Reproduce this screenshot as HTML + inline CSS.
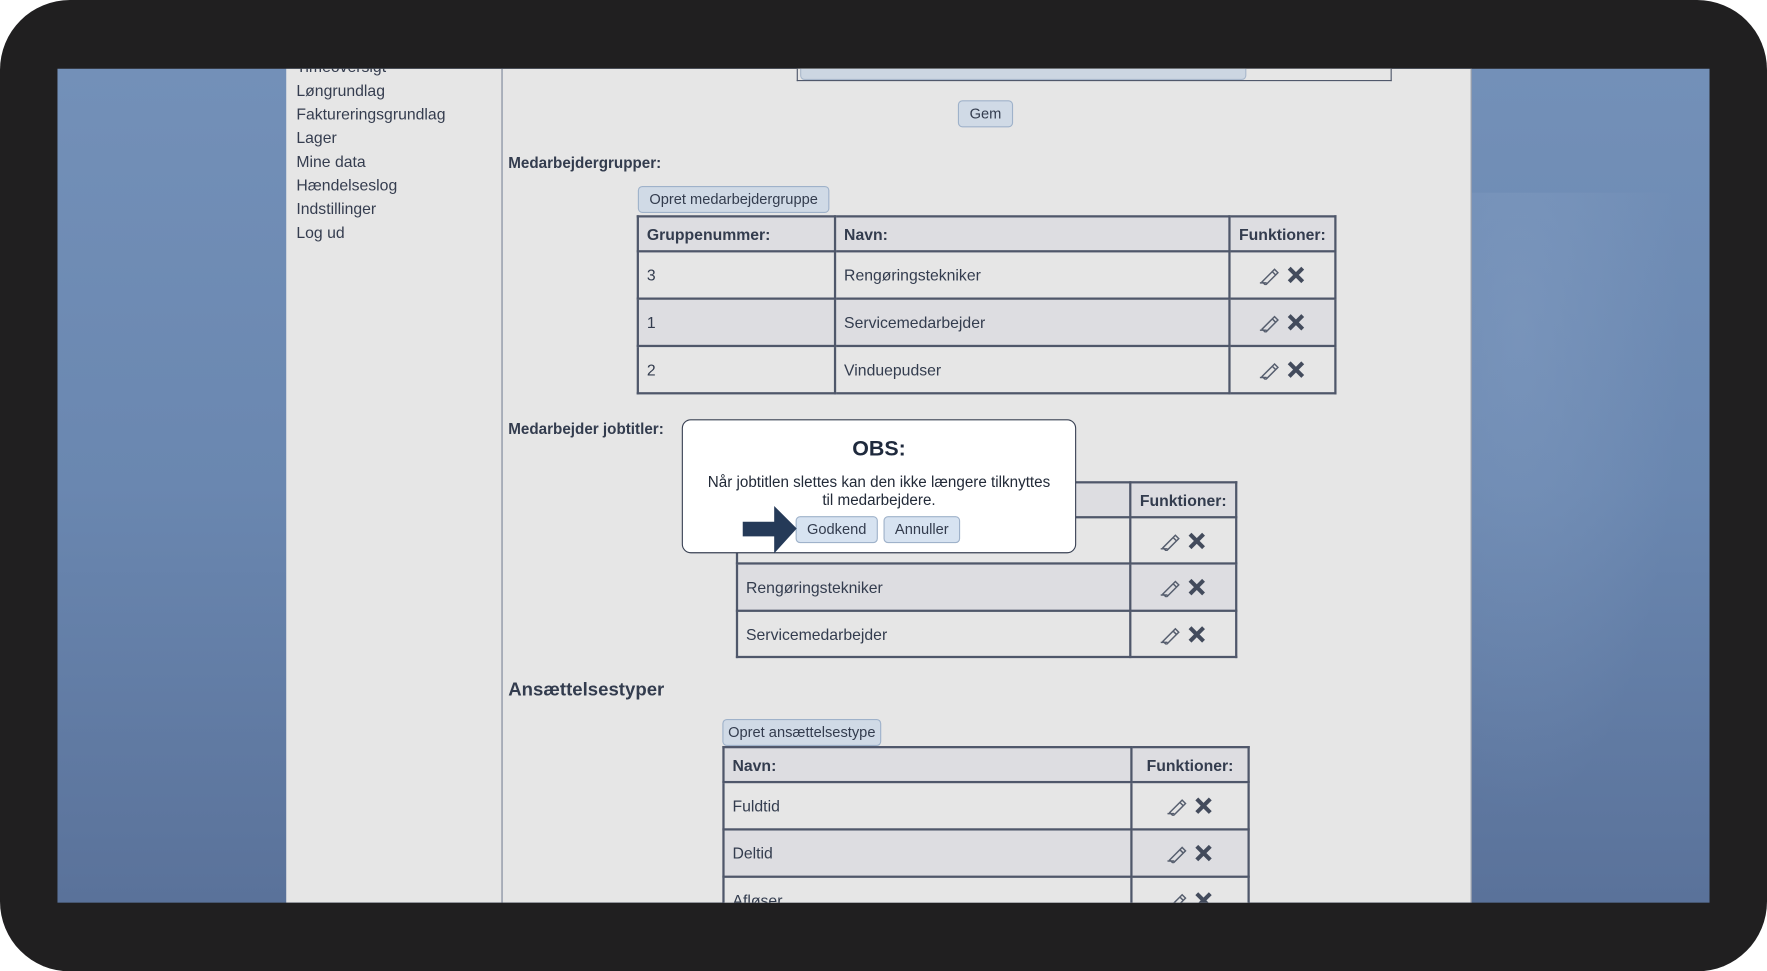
<!DOCTYPE html>
<html><head><meta charset="utf-8"><style>
html,body{margin:0;padding:0;width:1767px;height:971px;overflow:hidden;background:#fff}
#w{position:absolute;left:0;top:0;width:1568px;height:862px;transform:scale(1.12691);transform-origin:0 0;font-family:"Liberation Sans",Arial,sans-serif;color:#333c4e}
.frame{position:absolute;left:0;top:0;width:1568px;height:862px;background:#201f20;border-radius:62px}
.screen{position:absolute;left:51px;top:61px;width:1466px;height:740px;overflow:hidden;background:linear-gradient(180deg,#7390b8 0%,#6a87b0 50%,#5a729a 100%)}
.side{position:absolute;left:203px;top:0;width:191px;height:740px;background:#e6e6e6;border-right:1px solid #7b8496}
.main{position:absolute;left:395px;top:0;width:859px;height:740px;background:#e6e6e6;border-right:1px solid #8b93a3}
.a{position:absolute}
.nav{position:absolute;left:9px;font-size:14px;color:#353d4f}
.btn{position:absolute;background:#d0dae6;border:1px solid #9fb2ca;border-radius:4px;font-size:13px;color:#333c4e;text-align:center;box-sizing:border-box}
table{position:absolute;border-collapse:collapse;table-layout:fixed;font-size:14px;color:#333c4e}
td{border:2px solid #4f576a;padding:0 0 0 7px;box-sizing:border-box}
th{border:2px solid #4f576a;padding:0 0 0 7px;text-align:left;font-weight:bold;background:#dddde1}
th.f{text-align:center;padding:0}
td.f{text-align:center;padding:0}
td.f svg{vertical-align:middle}
tr.d td{background:#dddde1}
tr.l td{background:#e6e6e6}
h4{position:absolute;margin:0;font-size:13.5px;font-weight:bold}
</style></head><body><div id="w">
<div class="frame"></div>
<div class="screen">
 <div class="a" style="left:1254px;top:110px;width:212px;height:630px;background:radial-gradient(ellipse at 20% 20%,rgba(140,165,200,.35),transparent 60%)"></div>
 <div class="side">
  <div class="nav" style="top:-10px">Timeoversigt</div>
  <div class="nav" style="top:11px">Løngrundlag</div>
  <div class="nav" style="top:32px">Faktureringsgrundlag</div>
  <div class="nav" style="top:53px">Lager</div>
  <div class="nav" style="top:74px">Mine data</div>
  <div class="nav" style="top:95px">Hændelseslog</div>
  <div class="nav" style="top:116px">Indstillinger</div>
  <div class="nav" style="top:137px">Log ud</div>
 </div>
 <div class="main">
  <div class="a" style="left:261px;top:-2px;width:526px;height:12px;border:1px solid #4f576a;border-top:none;background:#e6e6e6"></div>
  <div class="a" style="left:264px;top:-2px;width:394px;height:10px;background:#ccd6e2;border:1px solid #a9b8cc;border-radius:0 0 4px 4px"></div>
  <div class="btn" style="left:404px;top:28px;width:49px;height:24px;line-height:22px">Gem</div>
  <h4 style="left:5px;top:76px">Medarbejdergrupper:</h4>
  <div class="btn" style="left:120px;top:104px;width:170px;height:24px;line-height:22px">Opret medarbejdergruppe</div>
  <table style="left:119px;top:130px;width:621px">
   <tr style="height:31px"><th style="width:166px">Gruppenummer:</th><th>Navn:</th><th class="f" style="width:92px">Funktioner:</th></tr>
   <tr class="l" style="height:42px"><td>3</td><td>Rengøringstekniker</td><td class="f"><svg width="46" height="18"><path d="M3 16 H9 M5 15 L16 4 L19 7 L8 18 Z M14 6 L17 9" fill="none" stroke="#565e6e" stroke-width="1.3"/><path d="M29 3 L41 15 M41 3 L29 15" stroke="#434b5c" stroke-width="3.6"/></svg></td></tr>
   <tr class="d" style="height:42px"><td>1</td><td>Servicemedarbejder</td><td class="f"><svg width="46" height="18"><path d="M3 16 H9 M5 15 L16 4 L19 7 L8 18 Z M14 6 L17 9" fill="none" stroke="#565e6e" stroke-width="1.3"/><path d="M29 3 L41 15 M41 3 L29 15" stroke="#434b5c" stroke-width="3.6"/></svg></td></tr>
   <tr class="l" style="height:42px"><td>2</td><td>Vinduepudser</td><td class="f"><svg width="46" height="18"><path d="M3 16 H9 M5 15 L16 4 L19 7 L8 18 Z M14 6 L17 9" fill="none" stroke="#565e6e" stroke-width="1.3"/><path d="M29 3 L41 15 M41 3 L29 15" stroke="#434b5c" stroke-width="3.6"/></svg></td></tr>
  </table>
  <h4 style="left:5px;top:312px">Medarbejder jobtitler:</h4>
  <table style="left:207px;top:366px;width:445px">
   <tr style="height:31px"><th>Navn:</th><th class="f" style="width:92px">Funktioner:</th></tr>
   <tr class="l" style="height:41px"><td></td><td class="f"><svg width="46" height="18"><path d="M3 16 H9 M5 15 L16 4 L19 7 L8 18 Z M14 6 L17 9" fill="none" stroke="#565e6e" stroke-width="1.3"/><path d="M29 3 L41 15 M41 3 L29 15" stroke="#434b5c" stroke-width="3.6"/></svg></td></tr>
   <tr class="d" style="height:42px"><td>Rengøringstekniker</td><td class="f"><svg width="46" height="18"><path d="M3 16 H9 M5 15 L16 4 L19 7 L8 18 Z M14 6 L17 9" fill="none" stroke="#565e6e" stroke-width="1.3"/><path d="M29 3 L41 15 M41 3 L29 15" stroke="#434b5c" stroke-width="3.6"/></svg></td></tr>
   <tr class="l" style="height:41px"><td>Servicemedarbejder</td><td class="f"><svg width="46" height="18"><path d="M3 16 H9 M5 15 L16 4 L19 7 L8 18 Z M14 6 L17 9" fill="none" stroke="#565e6e" stroke-width="1.3"/><path d="M29 3 L41 15 M41 3 L29 15" stroke="#434b5c" stroke-width="3.6"/></svg></td></tr>
  </table>
  <div class="a" style="left:159px;top:311px;width:350px;height:119px;background:#fff;border:1.5px solid #3a4254;border-radius:8px;box-sizing:border-box;text-align:center">
   <div style="font-size:19px;font-weight:bold;color:#1f2a3d;margin-top:15px">OBS:</div>
   <div style="font-size:13.5px;line-height:16px;margin-top:10px;color:#222a38">Når jobtitlen slettes kan den ikke længere tilknyttes<br>til medarbejdere.</div>
  </div>
  <div class="btn" style="left:260px;top:397px;width:73px;height:24px;line-height:22px;background:#d7e3f1">Godkend</div>
  <div class="btn" style="left:338px;top:397px;width:68px;height:24px;line-height:22px;background:#d7e3f1">Annuller</div>
  <svg class="a" style="left:213px;top:387px" width="50" height="44"><path d="M0 15 H28 V1 L48 21 L28 43 V28 H0 Z" fill="#253a58"/></svg>
  <div class="a" style="left:5px;top:542px;font-size:16.5px;font-weight:bold">Ansættelsestyper</div>
  <div class="btn" style="left:195px;top:577px;width:141px;height:24px;line-height:22px">Opret ansættelsestype</div>
  <table style="left:195px;top:601px;width:468px">
   <tr style="height:31px"><th>Navn:</th><th class="f" style="width:102px">Funktioner:</th></tr>
   <tr class="l" style="height:42px"><td>Fuldtid</td><td class="f"><svg width="46" height="18"><path d="M3 16 H9 M5 15 L16 4 L19 7 L8 18 Z M14 6 L17 9" fill="none" stroke="#565e6e" stroke-width="1.3"/><path d="M29 3 L41 15 M41 3 L29 15" stroke="#434b5c" stroke-width="3.6"/></svg></td></tr>
   <tr class="d" style="height:42px"><td>Deltid</td><td class="f"><svg width="46" height="18"><path d="M3 16 H9 M5 15 L16 4 L19 7 L8 18 Z M14 6 L17 9" fill="none" stroke="#565e6e" stroke-width="1.3"/><path d="M29 3 L41 15 M41 3 L29 15" stroke="#434b5c" stroke-width="3.6"/></svg></td></tr>
   <tr class="l" style="height:42px"><td>Afløser</td><td class="f"><svg width="46" height="18"><path d="M3 16 H9 M5 15 L16 4 L19 7 L8 18 Z M14 6 L17 9" fill="none" stroke="#565e6e" stroke-width="1.3"/><path d="M29 3 L41 15 M41 3 L29 15" stroke="#434b5c" stroke-width="3.6"/></svg></td></tr>
  </table>
 </div>
</div>
</div>
</body></html>
